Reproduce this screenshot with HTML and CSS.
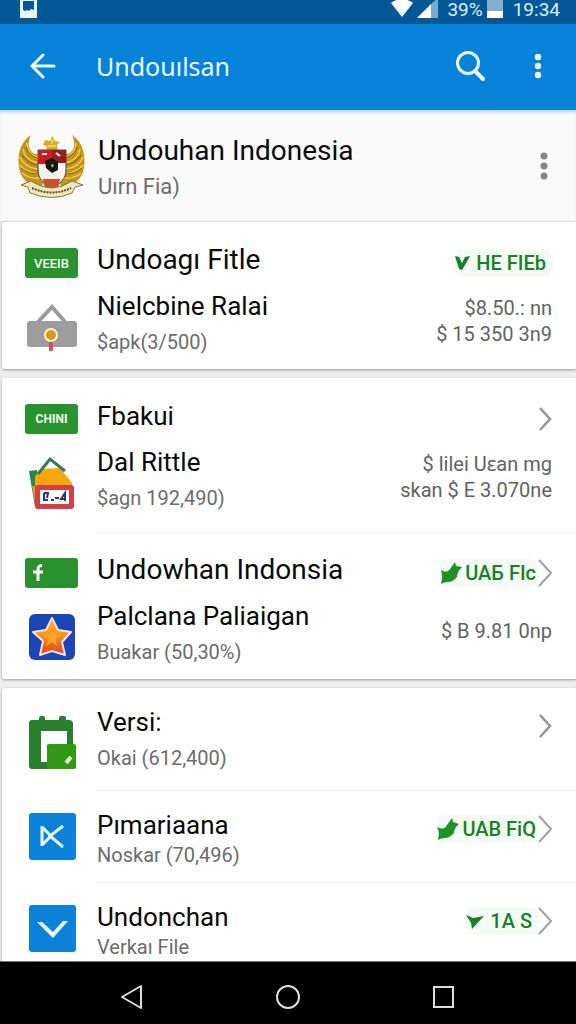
FILE: index.html
```html
<!DOCTYPE html>
<html lang="id">
<head>
<meta charset="UTF-8">
<meta name="viewport" content="width=device-width, initial-scale=1.0">
<title>Undouılsan</title>
<link rel="stylesheet" href="styles.css">
</head>
<body>
<div class="status-bar">
  <svg class="status-note" width="18" height="18" viewBox="0 0 18 18"><path d="M0 0h17v18H0z" fill="#e8f6ff"/><path d="M3 1h11v9l-3-1-2 2-2-1-2 1-2-1z" fill="#075796"/></svg>
  <svg width="22" height="18" viewBox="0 0 22 18"><path d="M0 3Q11-5 22 3L11 17z" fill="#fff"/></svg>
  <svg width="22" height="18" viewBox="0 0 22 18"><path d="M0 18L14 4v14z" fill="#fff"/><path d="M14 4l7-6v20h-7z" fill="#78a9d2"/></svg>
  <span class="percent">39%</span>
  <svg width="16" height="18" viewBox="0 0 16 18"><path d="M0 0h16v11H0z" fill="#86aed0"/><path d="M0 11h16v7H0z" fill="#fff"/></svg>
  <span class="clock">19:34</span>
</div>

<header class="app-bar">
  <button class="icon-btn" aria-label="Kembali">
    <svg width="26" height="26" viewBox="0 0 26 26" fill="none" stroke="#e9fbff" stroke-width="3" stroke-linecap="round" stroke-linejoin="round"><path d="M24 13H3M13 2L2 13l11 11"/></svg>
  </button>
  <h1>Undouılsan</h1>
  <button class="icon-btn" aria-label="Cari">
    <svg width="30" height="32" viewBox="0 0 30 32" fill="none" stroke="#e9fbff"><circle cx="13" cy="13" r="10.5" stroke-width="3"/><path d="M20 21l8 8" stroke-width="4" stroke-linecap="round"/></svg>
  </button>
  <button class="icon-btn" aria-label="Menu">
    <svg width="8" height="26" viewBox="0 0 8 26" fill="#e9fbff"><circle cx="4" cy="4" r="3.2"/><circle cx="4" cy="13" r="3.2"/><circle cx="4" cy="22" r="3.2"/></svg>
  </button>
</header>

<main>
  <section class="intro">
    <svg width="68" height="68" viewBox="0 0 68 68">
      <!-- wings -->
      <g id="wing">
        <path d="M13 3C2 10-2 25 2 40c3 8 10 14 20 18l6-12-7-8-2-16c-7 0-11-9-6-19z" fill="#c4951c"/>
        <path d="M9 11c0 8 4 12 10 14M5 17c1 8 7 12 14 14M2 25c3 7 9 11 17 12M2 33c4 6 10 8 18 9M4 41c6 5 11 6 19 5" fill="none" stroke="#f0ce55" stroke-width="1.5"/>
        <path d="M8 15c2 6 6 9 11 11M4 23c4 6 9 9 15 10M3 36c6 5 11 6 18 6" fill="none" stroke="#765816" stroke-width="1"/>
      </g>
      <use href="#wing" transform="matrix(-1 0 0 1 67 0)"/>
      <path d="M27 8l5 1 2-5 3 5 5 1-3 3 1 7H28l1-6-4-1z" fill="#d9ac23"/>
      <path d="M32 7l3 2-2 3M30 14h8" fill="none" stroke="#fff0a2"/>
      <!-- shield -->
      <path d="M20 18h28v20c0 9-6 14-14 18-8-4-14-9-14-18z" fill="#f2f0ec" stroke="#50452d"/>
      <path d="M20 18h14v14H20z" fill="#c91e20"/><path d="M34 18h14v13H34z" fill="#981d20"/>
      <path d="M34 32h13v7c-2 8-7 12-13 15z" fill="#f7f6ee"/>
      <path d="M25 47h17l-2 10H27z" fill="#c8502b"/>
      <path d="M27 29l7-3 6 4v8l-6 3-6-5z" fill="#171717"/><path d="M33 32l3 1-2 3z" fill="#dfc66b"/>
      <path d="M24 22h5M38 21l4 3" stroke="#fff" stroke-width="2"/>
      <!-- ribbon -->
      <path d="M13 49q21 14 41 0l11 4-8 2-3 6q-20 9-42 0l-2-6-7-2z" fill="#eee7bf" stroke="#8a762f"/>
      <path d="M14 56q20 9 39 0" fill="none" stroke="#5e5222" stroke-width="2" stroke-dasharray="2 1"/>
    </svg>
    <div class="text">
      <h2>Undouhan Indonesia</h2>
      <p>Uırn Fia)</p>
    </div>
    <button class="icon-btn more" aria-label="Opsi">
      <svg width="8" height="32" viewBox="0 0 8 32" fill="#858585"><circle cx="4" cy="6" r="3.5"/><circle cx="4" cy="16" r="3.5"/><circle cx="4" cy="26" r="3.5"/></svg>
    </button>
  </section>

  <section class="card">
    <div class="group">
      <div class="item lead">
        <div class="icon"><span class="label">VEEIB</span></div>
        <div class="text"><h2>Undoagı Fitle</h2></div>
        <div class="side">
          <span class="badge spaced"><svg width="15" height="18" viewBox="0 0 15 18"><path d="M0 2l4 1 3 6 3-6 5-1-5 9-3 5-3-1z" fill="#168126"/></svg>HE FIEb</span>
        </div>
      </div>
      <div class="item">
        <div class="icon">
          <svg width="52" height="50" viewBox="0 0 52 50"><path d="M11 19L26 3l14 16" fill="none" stroke="#9b9b9b" stroke-width="4"/><rect x="1" y="17" width="50" height="26" rx="3" fill="#9d9d9d"/><path d="M23 36h4v11h-4z" fill="#c35c4a"/><circle cx="25" cy="31" r="7" fill="#fff5d0"/><circle cx="25" cy="31" r="5" fill="#d39a22"/></svg>
        </div>
        <div class="text"><h2>Nielcbine Ralai</h2><p>$apk(3/500)</p></div>
        <div class="value">$8.50.: nn<br>$ 15 350 3n9</div>
      </div>
    </div>
  </section>

  <section class="card">
    <div class="group">
      <div class="item">
        <div class="icon"><span class="label small">CHINI</span></div>
        <div class="text"><h2>Fbakui</h2></div>
        <div class="side">
          <button class="chevron" aria-label="Buka Fbakui"><svg width="14" height="26" viewBox="0 0 14 26"><path d="M2 2l10 11L2 24" fill="none" stroke="#969696" stroke-width="2.6"/></svg></button>
        </div>
      </div>
      <div class="item">
        <div class="icon">
          <svg width="48" height="54" viewBox="0 0 48 54"><path d="M1 15l8-1 6 38-8-1z" fill="#26864a"/><path d="M7 30V20l7-7 18-1 12 15v7H7z" fill="#f6a70b"/><path d="M10 18L22 3l15 12" fill="none" stroke="#327b55" stroke-width="3"/><path d="M4 30l4 22 5 1-2-22z" fill="#ed9637"/><rect x="7" y="29" width="39" height="24" rx="3" fill="#d14049"/><path d="M12 34h29v14H12z" fill="#fff"/><path d="M16 37v7h4m-4-7h4l-1 5m4 2h3m1-2h4m5 1h-3l4-6v8" fill="none" stroke="#333675" stroke-width="2"/></svg>
        </div>
        <div class="text"><h2>Dal Rittle</h2><p>$agn 192,490)</p></div>
        <div class="value">$ lilei Uɛan mg<br>skan $ E 3.070ne</div>
      </div>
    </div>
    <div class="group">
      <div class="item lead">
        <div class="icon"><span class="label cross"><svg width="14" height="18" viewBox="0 0 14 18"><path d="M10 2Q6 1 6 6v11M1 8h10" fill="none" stroke="#fff" stroke-width="3"/></svg></span></div>
        <div class="text"><h2>Undowhan Indonsia</h2></div>
        <div class="side">
          <span class="badge"><svg width="22" height="24" viewBox="0 0 22 24"><path d="M1 9q6 4 9-1l5-7 1 4 6 1q-5 5-5 10-4 5-9 5-4 0-7 2 2-8 0-14z" fill="#219029"/></svg>UAБ FIc</span>
          <button class="chevron" aria-label="Buka Undowhan"><svg width="14" height="28" viewBox="0 0 14 28"><path d="M1 1l12 13L1 27" fill="none" stroke="#a2a2a2" stroke-width="2"/></svg></button>
        </div>
      </div>
      <div class="item">
        <div class="icon">
          <svg width="48" height="50" viewBox="0 0 48 50"><defs><linearGradient id="star" x2="0" y2="1"><stop stop-color="#ffb91f"/><stop offset=".5" stop-color="#f6901f"/><stop offset="1" stop-color="#df3d1c"/></linearGradient></defs><rect x="1" width="46" height="46" rx="6" fill="#1c45b5"/><path d="M24 4l6 12 13 2-9 10 3 13-13-4-12 4 3-14-10-9 13-2z" fill="url(#star)" stroke="#ffe1da" stroke-width="2" stroke-linejoin="round"/><path d="M24 13l3 7 7 1-6 4 1 7-5-4-6 4 2-7-5-4 7-1z" fill="#f9a522"/></svg>
        </div>
        <div class="text"><h2>Palclana Paliaigan</h2><p>Buakar (50,30%)</p></div>
        <div class="value">$ B 9.81 0np</div>
      </div>
    </div>
  </section>

  <section class="card list">
    <div class="group">
      <div class="item">
        <div class="icon">
          <svg width="48" height="54" viewBox="0 0 48 54"><path d="M4 4h7V2q0-2 2-2h2q2 0 2 2v2h14V2q0-2 2-2h3q2 0 2 2v2h3q4 0 4 4v42q0 3-3 3H4q-3 0-3-3V7q0-3 3-3z" fill="#297f2d"/><path d="M13 15h26v14H19v17h-6z" fill="#fff"/><rect x="19" y="28" width="29" height="25" rx="2" fill="#319916"/><path d="M38 47l5-6" stroke="#e4fbd7" stroke-width="4"/></svg>
        </div>
        <div class="text"><h2>Versi:</h2><p>Okai (612,400)</p></div>
        <div class="side">
          <button class="chevron" aria-label="Buka Versi"><svg width="14" height="26" viewBox="0 0 14 26"><path d="M2 2l10 11L2 24" fill="none" stroke="#969696" stroke-width="2.6"/></svg></button>
        </div>
      </div>
    </div>
    <div class="group compact">
      <div class="item">
        <div class="icon">
          <svg width="48" height="48" viewBox="0 0 48 48"><rect width="47" height="47" x="1" rx="3" fill="#0b82d8"/><path d="M14 13v20M14 14l9 9-9 9M35 13L22 23l13 11" fill="none" stroke="#e4f8ff" stroke-width="3"/></svg>
        </div>
        <div class="text"><h2>Pımariaana</h2><p>Noskar (70,496)</p></div>
        <div class="side">
          <span class="badge"><svg width="22" height="24" viewBox="0 0 22 24"><path d="M0 10q7 4 10-2l5-7 1 4 6 2q-5 4-5 9-4 5-9 5-4 0-7 2 2-8-1-13z" fill="#219029"/></svg>UAB FiQ</span>
          <button class="chevron" aria-label="Buka Pımariaana"><svg width="14" height="28" viewBox="0 0 14 28"><path d="M1 1l12 13L1 27" fill="none" stroke="#a2a2a2" stroke-width="2"/></svg></button>
        </div>
      </div>
    </div>
    <div class="group compact">
      <div class="item">
        <div class="icon">
          <svg width="48" height="48" viewBox="0 0 48 48"><rect width="47" height="47" x="1" rx="3" fill="#0b82d8"/><path d="M9 17h5l11 10 10-11h5L25 33z" fill="#f0fbff"/></svg>
        </div>
        <div class="text"><h2>Undonchan</h2><p>Verkaı File</p></div>
        <div class="side">
          <span class="badge spaced"><svg width="18" height="18" viewBox="0 0 18 18"><path d="M0 3l7 3 11-2L6 17l-1-6z" fill="#168126"/></svg>1A S</span>
          <button class="chevron" aria-label="Buka Undonchan"><svg width="14" height="28" viewBox="0 0 14 28"><path d="M1 1l12 13L1 27" fill="none" stroke="#a2a2a2" stroke-width="2"/></svg></button>
        </div>
      </div>
    </div>
  </section>
</main>

<nav class="nav-bar">
  <button aria-label="Kembali"><svg width="26" height="26" viewBox="0 0 26 26"><path d="M22 2v22L3 13z" fill="none" stroke="#ddd" stroke-width="2" stroke-linejoin="round"/></svg></button>
  <button aria-label="Beranda"><svg width="26" height="26" viewBox="0 0 26 26"><circle cx="13" cy="13" r="11" fill="none" stroke="#ddd" stroke-width="2"/></svg></button>
  <button aria-label="Terbaru"><svg width="26" height="26" viewBox="0 0 26 26"><rect x="3" y="3" width="19" height="20" fill="none" stroke="#ddd" stroke-width="2"/></svg></button>
</nav>
</body>
</html>
```
FILE: styles.css
```css
* {
  box-sizing: border-box;
}

body {
  margin: 0;
  height: 100vh;
  display: flex;
  flex-direction: column;
  overflow: hidden;
  font-family: Roboto, "Noto Sans", sans-serif;
  background: #efefef;
  color: #0a0a0a;
}

h1, h2, p {
  margin: 0;
  font-weight: 400;
}

svg {
  display: block;
  flex-shrink: 0;
}

button {
  padding: 0;
  border: none;
  background: none;
  cursor: pointer;
}

.status-bar {
  display: flex;
  align-items: flex-start;
  gap: 4px;
  height: 24px;
  padding: 0 16px 0 20px;
  background: #045895;
  color: #d9efff;
  font-size: 19px;
  line-height: 20px;
}

.status-note {
  margin-right: auto;
}

.percent {
  margin-left: 4px;
}

.clock {
  margin-left: 6px;
}

.app-bar {
  display: flex;
  align-items: center;
  height: 86px;
  padding: 0 16px 2px 21px;
  background: #0683d9;
  color: #e9fbff;
}

.app-bar h1 {
  flex: 1;
  margin-left: 31px;
  font-family: "Noto Sans", sans-serif;
  font-size: 25px;
  line-height: 36px;
}

.icon-btn {
  display: flex;
  align-items: center;
  justify-content: center;
  width: 44px;
  height: 44px;
}

.icon-btn + .icon-btn {
  margin-left: 24px;
}

main {
  flex: 1;
  min-height: 0;
  overflow: hidden;
}

.intro {
  display: flex;
  align-items: center;
  gap: 12px;
  height: 112px;
  padding: 0 10px 0 18px;
  background: #fafafa;
  border-bottom: 1px solid #e4e4e4;
  box-shadow: inset 0 4px 4px -2px #ccc;
}

.text {
  flex: 1;
  min-width: 0;
}

.text h2 {
  font-size: 26px;
  line-height: 36px;
  white-space: nowrap;
}

.intro .text h2,
.lead .text h2 {
  font-size: 28px;
}

.text p {
  margin-top: 6px;
  color: #6c6c6c;
  font-size: 20px;
  line-height: 24px;
  white-space: nowrap;
}

.intro .text p {
  font-size: 22px;
}

.card {
  margin: 0 0 9px 2px;
  background: #fff;
  border-radius: 3px 0 0 3px;
  box-shadow: 0 1px 3px #999;
}

.group {
  display: flex;
  flex-direction: column;
  gap: 10px;
  padding: 20px 24px 22px 22px;
}

.group:last-child {
  padding-bottom: 15px;
}

/* divider starts at the text column */
.group + .group {
  background: linear-gradient(#ededed, #ededed) 94px 0 / 100% 1px no-repeat;
}

.list .group {
  padding-top: 16px;
  padding-bottom: 20px;
}

.list .compact {
  padding-top: 17px;
  padding-bottom: 15px;
}

.compact .text p {
  margin-top: 0;
}

.item {
  display: flex;
  align-items: center;
  gap: 18px;
}

.icon {
  display: flex;
  align-self: flex-end;
  justify-content: center;
  width: 55px;
}

.compact .icon {
  align-self: center;
}

.label {
  display: flex;
  align-items: center;
  justify-content: center;
  width: 53px;
  height: 30px;
  border-radius: 3px;
  background: #2b902f;
  color: #effff0;
  font-size: 13px;
  font-weight: 500;
}

.label.small {
  font-size: 12px;
  font-weight: 700;
}

.label.cross {
  justify-content: flex-start;
  padding-left: 7px;
}

.side {
  display: flex;
  align-items: center;
  align-self: flex-start;
  height: 36px;
  padding-top: 6px;
}

.list .side {
  padding-top: 8px;
}

.badge {
  display: flex;
  align-items: center;
  gap: 3px;
  height: 28px;
  padding-right: 2px;
  border-radius: 8px;
  background: #f4fbf4;
  color: #168126;
  font-size: 20px;
  font-weight: 500;
}

.badge.spaced {
  gap: 6px;
  padding-right: 6px;
}

.chevron {
  display: flex;
}

.value {
  color: #626262;
  font-size: 20px;
  line-height: 26px;
  text-align: right;
  white-space: nowrap;
}

.nav-bar {
  display: flex;
  justify-content: center;
  gap: 130px;
  height: 63px;
  padding-top: 8px;
  border-top: 1px solid #777;
  background: #000;
}

.nav-bar button {
  display: flex;
  align-items: center;
}
```
